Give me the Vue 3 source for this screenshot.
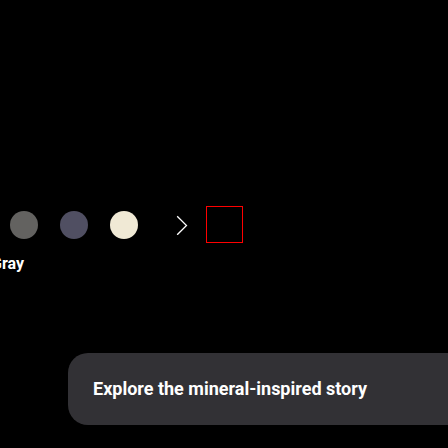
<script setup>
const colors = [
  { name: 'Gray', hex: '#636260' },
  { name: 'Violet', hex: '#504f62' },
  { name: 'Yellow', hex: '#f0e9d5' }
]
</script>

<template>
  <main class="page">
    <section class="picker">
      <div class="row">
        <div class="swatches">
          <button
            v-for="color in colors"
            :key="color.name"
            class="swatch"
            type="button"
            :aria-label="color.name"
            :style="{ backgroundColor: color.hex }"
          ></button>
        </div>
        <button class="next" type="button" aria-label="Next colors">
          <svg width="12" height="21" viewBox="0 0 12 21" aria-hidden="true">
            <path d="M1.2 2.2 L10.5 11.5 L1.2 20.8" fill="none" stroke="#fff" stroke-width="1.3" />
          </svg>
        </button>
        <div class="frame"></div>
      </div>
      <p class="name">Gray</p>
    </section>
    <a class="story" href="#story">Explore the mineral-inspired story</a>
  </main>
</template>

<style>
body {
  background: #000;
}
</style>

<style scoped>
.page {
  box-sizing: border-box;
  min-height: 100vh;
  padding-top: 206px;
  overflow: hidden;
  background: #000;
  color: #fff;
  font-family: Roboto, sans-serif;
}

.row {
  display: flex;
  align-items: center;
  padding-left: 10px;
}

.swatches {
  display: flex;
  gap: 22px;
}

.swatch {
  width: 28px;
  height: 28px;
  padding: 0;
  border: 0;
  border-radius: 50%;
}

.next {
  display: flex;
  margin: 0 18px 0 38px;
  padding: 0;
  border: 0;
  background: none;
}

.frame {
  box-sizing: border-box;
  width: 37px;
  height: 37px;
  border: 1px solid #f00;
}

.name {
  display: flex;
  justify-content: flex-end;
  width: 24px;
  margin: 10px 0 0;
  font-size: 16px;
  font-weight: 700;
  line-height: 22px;
}

.story {
  display: block;
  margin: 78px 0 0 68px;
  padding: 24px 0 24px 25px;
  border-radius: 20px 0 0 20px;
  background: #323135;
  color: #fff;
  font-size: 18px;
  font-weight: 700;
  line-height: 24px;
  text-decoration: none;
  white-space: nowrap;
}
</style>
